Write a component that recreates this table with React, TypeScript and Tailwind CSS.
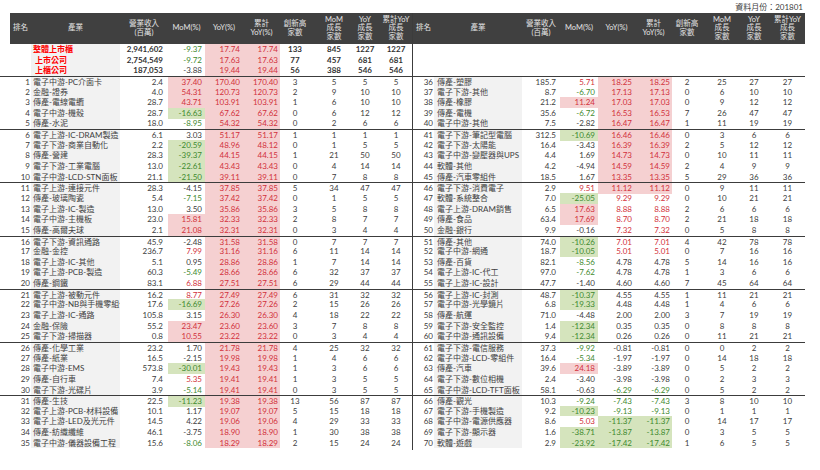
import React from "react";

type R = [number, string, string, string, string, string, number, number, number, number];

const leftRows: R[] = [
  [1, "電子中游-PC介面卡", "2.4", "37.40", "170.40", "170.40", 3, 5, 5, 5],
  [2, "金融-證券", "4.0", "54.31", "120.73", "120.73", 2, 9, 10, 10],
  [3, "傳產-電線電纜", "28.7", "43.71", "103.91", "103.91", 1, 6, 10, 10],
  [4, "電子中游-機殼", "28.7", "-16.63", "67.62", "67.62", 0, 6, 12, 12],
  [5, "傳產-水泥", "18.0", "-8.95", "54.32", "54.32", 0, 2, 6, 6],
  [6, "電子上游-IC-DRAM製造", "6.1", "3.03", "51.17", "51.17", 1, 1, 1, 1],
  [7, "電子下游-商業自動化", "2.2", "-20.59", "48.96", "48.12", 0, 1, 5, 5],
  [8, "傳產-營建", "28.3", "-39.37", "44.15", "44.15", 1, 21, 50, 50],
  [9, "電子下游-工業電腦", "13.0", "-22.61", "43.43", "43.43", 0, 4, 14, 14],
  [10, "電子中游-LCD-STN面板", "21.1", "-21.50", "39.11", "39.11", 0, 7, 8, 8],
  [11, "電子上游-連接元件", "28.3", "-4.15", "37.85", "37.85", 5, 34, 47, 47],
  [12, "傳產-玻璃陶瓷", "5.4", "-7.15", "37.42", "37.42", 0, 1, 5, 5],
  [13, "電子上游-IC-製造", "13.0", "3.50", "35.86", "35.86", 3, 5, 8, 8],
  [14, "電子中游-主機板", "23.0", "15.81", "32.33", "32.33", 2, 8, 7, 7],
  [15, "傳產-高爾夫球", "2.1", "21.08", "32.31", "32.31", 0, 3, 4, 4],
  [16, "電子下游-資訊通路", "45.9", "-2.48", "31.58", "31.58", 0, 7, 7, 7],
  [17, "金融-金控", "236.7", "7.99", "31.16", "31.16", 6, 11, 14, 14],
  [18, "電子上游-IC-其他", "5.1", "0.95", "28.86", "28.86", 1, 7, 14, 14],
  [19, "電子上游-PCB-製造", "60.3", "-5.49", "28.66", "28.66", 6, 32, 37, 37],
  [20, "傳產-鋼鐵", "83.1", "6.88", "27.51", "27.51", 6, 29, 44, 44],
  [21, "電子上游-被動元件", "16.2", "8.77", "27.49", "27.49", 6, 31, 32, 32],
  [22, "電子中游-NB與手機零組件", "17.6", "-16.69", "27.26", "27.26", 2, 15, 26, 26],
  [23, "電子上游-IC-通路", "105.8", "3.15", "26.30", "26.30", 4, 18, 22, 22],
  [24, "金融-保險", "55.2", "23.47", "23.60", "23.60", 3, 7, 8, 8],
  [25, "電子下游-掃描器", "0.8", "10.55", "23.22", "23.22", 0, 3, 4, 4],
  [26, "傳產-化學工業", "23.2", "1.70", "21.78", "21.78", 4, 25, 32, 32],
  [27, "傳產-紙業", "16.5", "-2.15", "19.98", "19.98", 1, 4, 6, 6],
  [28, "電子中游-EMS", "573.8", "-30.01", "19.43", "19.43", 1, 3, 6, 6],
  [29, "傳產-自行車", "7.4", "5.35", "19.41", "19.41", 1, 3, 5, 5],
  [30, "電子下游-光碟片", "3.9", "-5.14", "19.41", "19.41", 0, 3, 5, 5],
  [31, "傳產-生技", "22.5", "-11.23", "19.38", "19.38", 13, 56, 87, 87],
  [32, "電子上游-PCB-材料設備", "10.1", "1.17", "19.07", "19.07", 5, 15, 18, 18],
  [33, "電子上游-LED及光元件", "14.5", "4.22", "19.06", "19.06", 4, 29, 33, 33],
  [34, "傳產-紡織纖維", "46.1", "-3.75", "18.90", "18.90", 1, 30, 38, 38],
  [35, "電子中游-儀器設備工程", "15.6", "-8.06", "18.29", "18.29", 2, 15, 24, 24],
];

const rightRows: R[] = [
  [36, "傳產-塑膠", "185.7", "5.71", "18.25", "18.25", 2, 25, 27, 27],
  [37, "電子下游-其他", "8.7", "-6.70", "17.13", "17.13", 0, 6, 10, 10],
  [38, "傳產-橡膠", "21.2", "11.24", "17.03", "17.03", 0, 9, 12, 12],
  [39, "傳產-電機", "35.6", "-6.72", "16.53", "16.53", 7, 26, 47, 47],
  [40, "電子中游-其他", "7.5", "-2.82", "16.47", "16.47", 1, 11, 19, 19],
  [41, "電子下游-筆記型電腦", "312.5", "-10.69", "16.46", "16.46", 0, 3, 6, 6],
  [42, "電子下游-太陽能", "16.4", "-3.43", "16.39", "16.39", 2, 5, 12, 12],
  [43, "電子中游-變壓器與UPS", "4.4", "1.69", "14.73", "14.73", 0, 10, 11, 11],
  [44, "軟體-其他", "4.2", "-4.94", "14.59", "14.59", 2, 4, 9, 9],
  [45, "傳產-汽車零組件", "18.5", "1.67", "13.35", "13.35", 5, 29, 36, 36],
  [46, "電子下游-消費電子", "2.9", "9.51", "11.12", "11.12", 0, 9, 11, 11],
  [47, "軟體-系統整合", "7.0", "-25.05", "9.29", "9.29", 0, 10, 21, 21],
  [48, "電子上游-DRAM銷售", "6.5", "17.63", "8.88", "8.88", 2, 6, 6, 6],
  [49, "傳產-食品", "63.4", "17.69", "8.70", "8.70", 2, 21, 18, 18],
  [50, "金融-銀行", "9.9", "-0.16", "7.32", "7.32", 0, 5, 8, 8],
  [51, "傳產-其他", "74.0", "-10.26", "7.01", "7.01", 4, 42, 78, 78],
  [52, "電子中游-網通", "18.7", "-10.05", "5.01", "5.01", 0, 7, 16, 16],
  [53, "傳產-百貨", "82.1", "-8.56", "4.78", "4.78", 5, 14, 16, 16],
  [54, "電子上游-IC-代工", "97.0", "-7.62", "4.78", "4.78", 1, 3, 6, 6],
  [55, "電子上游-IC-設計", "47.7", "-1.40", "4.60", "4.60", 7, 45, 64, 64],
  [56, "電子上游-IC-封測", "48.7", "-10.37", "4.55", "4.55", 1, 11, 21, 21],
  [57, "電子中游-光學鏡片", "6.8", "-19.33", "4.48", "4.48", 1, 4, 6, 6],
  [58, "傳產-航運", "71.0", "-4.48", "2.00", "2.00", 3, 7, 19, 19],
  [59, "電子下游-安全監控", "1.4", "-12.34", "0.35", "0.35", 0, 8, 8, 8],
  [60, "電子中游-通訊設備", "9.4", "-12.34", "0.26", "0.26", 0, 11, 21, 21],
  [61, "電子下游-電信服務", "37.3", "-9.92", "-0.81", "-0.81", 0, 0, 2, 2],
  [62, "電子中游-LCD-零組件", "16.4", "-5.34", "-1.97", "-1.97", 0, 14, 18, 18],
  [63, "傳產-汽車", "39.6", "24.18", "-3.89", "-3.89", 0, 5, 2, 2],
  [64, "電子下游-數位相機", "2.4", "-3.40", "-3.98", "-3.98", 0, 2, 3, 3],
  [65, "電子中游-LCD-TFT面板", "58.1", "-0.63", "-6.29", "-6.29", 0, 5, 2, 2],
  [66, "傳產-觀光", "10.3", "-9.24", "-7.43", "-7.43", 3, 8, 10, 10],
  [67, "電子下游-手機製造", "9.2", "-10.23", "-9.13", "-9.13", 0, 1, 1, 1],
  [68, "電子中游-電源供應器", "8.6", "5.03", "-11.37", "-11.37", 0, 14, 17, 17],
  [69, "電子下游-顯示器", "1.6", "-38.71", "-13.87", "-13.87", 0, 3, 5, 5],
  [70, "軟體-遊戲", "2.9", "-23.92", "-17.42", "-17.42", 1, 6, 5, 5],
];

type S = [string, string, string, string, string, number, number, number, number, string];
const summary: S[] = [
  ["整體上市櫃", "2,941,602", "-9.37", "17.74", "17.74", 133, 845, 1227, 1227, "pl-[2px]"],
  ["上市公司", "2,754,549", "-9.72", "17.63", "17.63", 77, 457, 681, 681, "pl-[4px]"],
  ["上櫃公司", "187,053", "-3.88", "19.44", "19.44", 56, 388, 546, 546, "pl-[4px]"],
];

function tone(s: string) {
  const v = parseFloat(s);
  if (v >= 10) return "bg-[#f5d0d1] text-[#d2313c]";
  if (v >= 5) return "text-[#d2313c]";
  if (v <= -10) return "bg-[#d5e4bd] text-[#3f8a2f]";
  if (v <= -5) return "text-[#3f8a2f]";
  return "text-[#404040]";
}

type Cfg = {
  grid: string;
  headGrid: string;
  head: string;
  rank: string;
  name: string;
  rev: string;
  momc: string;
  cumc: string;
  summary: boolean;
};

const leftCfg: Cfg = {
  grid: "grid grid-cols-[31px_89px_48px_37px_38px_37px_30px_40px_30px_32px]",
  headGrid: "grid grid-cols-[21px_89px_48px_37px_38px_37px_30px_40px_30px_32px] ml-[10px]",
  head: "w-[412px]",
  rank: "pr-[1px]",
  name: "pl-[2px]",
  rev: "pr-[5px]",
  momc: "pl-[8px]",
  cumc: "",
  summary: true,
};

const rightCfg: Cfg = {
  grid: "grid grid-cols-[21px_88px_38px_38px_37px_37px_30px_40px_24px_39px]",
  headGrid: "grid grid-cols-[21px_88px_38px_38px_37px_37px_30px_40px_24px_39px]",
  head: "w-[392px]",
  rank: "pr-[1px]",
  name: "pl-[3px]",
  rev: "pr-[4px]",
  momc: "",
  cumc: "pl-[4px]",
  summary: false,
};

const heads: string[][] = [
  ["排名"],
  ["產業"],
  ["營業收入", "(百萬)"],
  ["MoM(%)"],
  ["YoY(%)"],
  ["累計", "YoY(%)"],
  ["創新高", "家數"],
  ["MoM", "成長", "家數"],
  ["YoY", "成長", "家數"],
  ["累計YoY", "成長", "家數"],
];

function Header({ cfg }: { cfg: Cfg }) {
  return (
    <div className={`${cfg.head} h-[31px]`}>
      <div className={`${cfg.headGrid} h-full bg-[#404040] text-[#e4e4e4] text-[7.5px] leading-[8.5px]`}>
        {heads.map((lines, i) => (
          <div
            key={i}
            className={`flex flex-col items-center justify-center whitespace-nowrap ${i === 7 ? cfg.momc : ""} ${i === 9 ? cfg.cumc : ""}`}
          >
            {lines.map((l, j) => (
              <span key={j}>{l}</span>
            ))}
          </div>
        ))}
      </div>
    </div>
  );
}

function Table({ cfg, rows }: { cfg: Cfg; rows: R[] }) {
  return (
    <div className="flex flex-col">
      <Header cfg={cfg} />
      {cfg.summary
        ? summary.map((s, i) => (
            <div key={i} className={`${cfg.grid} h-[10.65px]`}>
              <div />
              <div className={`bg-[#f2f2f2] ${s[9]} text-[#ff0000] font-bold whitespace-nowrap overflow-hidden`}>{s[0]}</div>
              <div className={`text-right ${cfg.rev} font-bold text-[#333333]`}>{s[1]}</div>
              <div className={`text-right pr-[3px] ${tone(s[2])}`}>{s[2]}</div>
              <div className={`text-right pr-[3px] ${tone(s[3])}`}>{s[3]}</div>
              <div className={`text-right pr-[2px] ${tone(s[4])}`}>{s[4]}</div>
              <div className="text-center font-bold text-[#333333]">{s[5]}</div>
              <div className={`text-center font-bold text-[#333333] ${cfg.momc}`}>{s[6]}</div>
              <div className="text-center font-bold text-[#333333]">{s[7]}</div>
              <div className={`text-center font-bold text-[#333333] ${cfg.cumc}`}>{s[8]}</div>
            </div>
          ))
        : [0, 1, 2].map((i) => <div key={i} className="h-[10.65px]" />)}
      {rows.map((r, i) => (
        <div
          key={r[0]}
          className={`${cfg.grid} h-[10.65px] ${i % 5 === 0 ? "border-t border-[#3c3c3c]" : ""}`}
        >
          <div className={`text-right ${cfg.rank} text-[#404040]`}>{r[0]}</div>
          <div className={`bg-[#f2f2f2] ${cfg.name} text-[#404040] whitespace-nowrap overflow-hidden`}>{r[1]}</div>
          <div className={`text-right ${cfg.rev} text-[#404040]`}>{r[2]}</div>
          <div className={`text-right pr-[3px] ${tone(r[3])}`}>{r[3]}</div>
          <div className={`text-right pr-[3px] ${tone(r[4])}`}>{r[4]}</div>
          <div className={`text-right pr-[2px] ${tone(r[5])}`}>{r[5]}</div>
          <div className="text-center text-[#404040]">{r[6]}</div>
          <div className={`text-center text-[#404040] ${cfg.momc}`}>{r[7]}</div>
          <div className="text-center text-[#404040]">{r[8]}</div>
          <div className={`text-center text-[#404040] ${cfg.cumc}`}>{r[9]}</div>
        </div>
      ))}
    </div>
  );
}

export default function App() {
  return (
    <div className="w-[820px] h-[470px] bg-white overflow-hidden font-['Lato','Noto_Sans_CJK_TC',sans-serif] text-[8px] leading-[10.65px]">
      <div className="h-[13px] w-[803px] text-right text-[#404040] text-[8px] leading-[14px]">資料月份：201801</div>
      <div className="flex items-start">
        <Table cfg={leftCfg} rows={leftRows} />
        <div className="w-px h-[437px] bg-[#3c3c3c]" />
        <Table cfg={rightCfg} rows={rightRows} />
      </div>
    </div>
  );
}
